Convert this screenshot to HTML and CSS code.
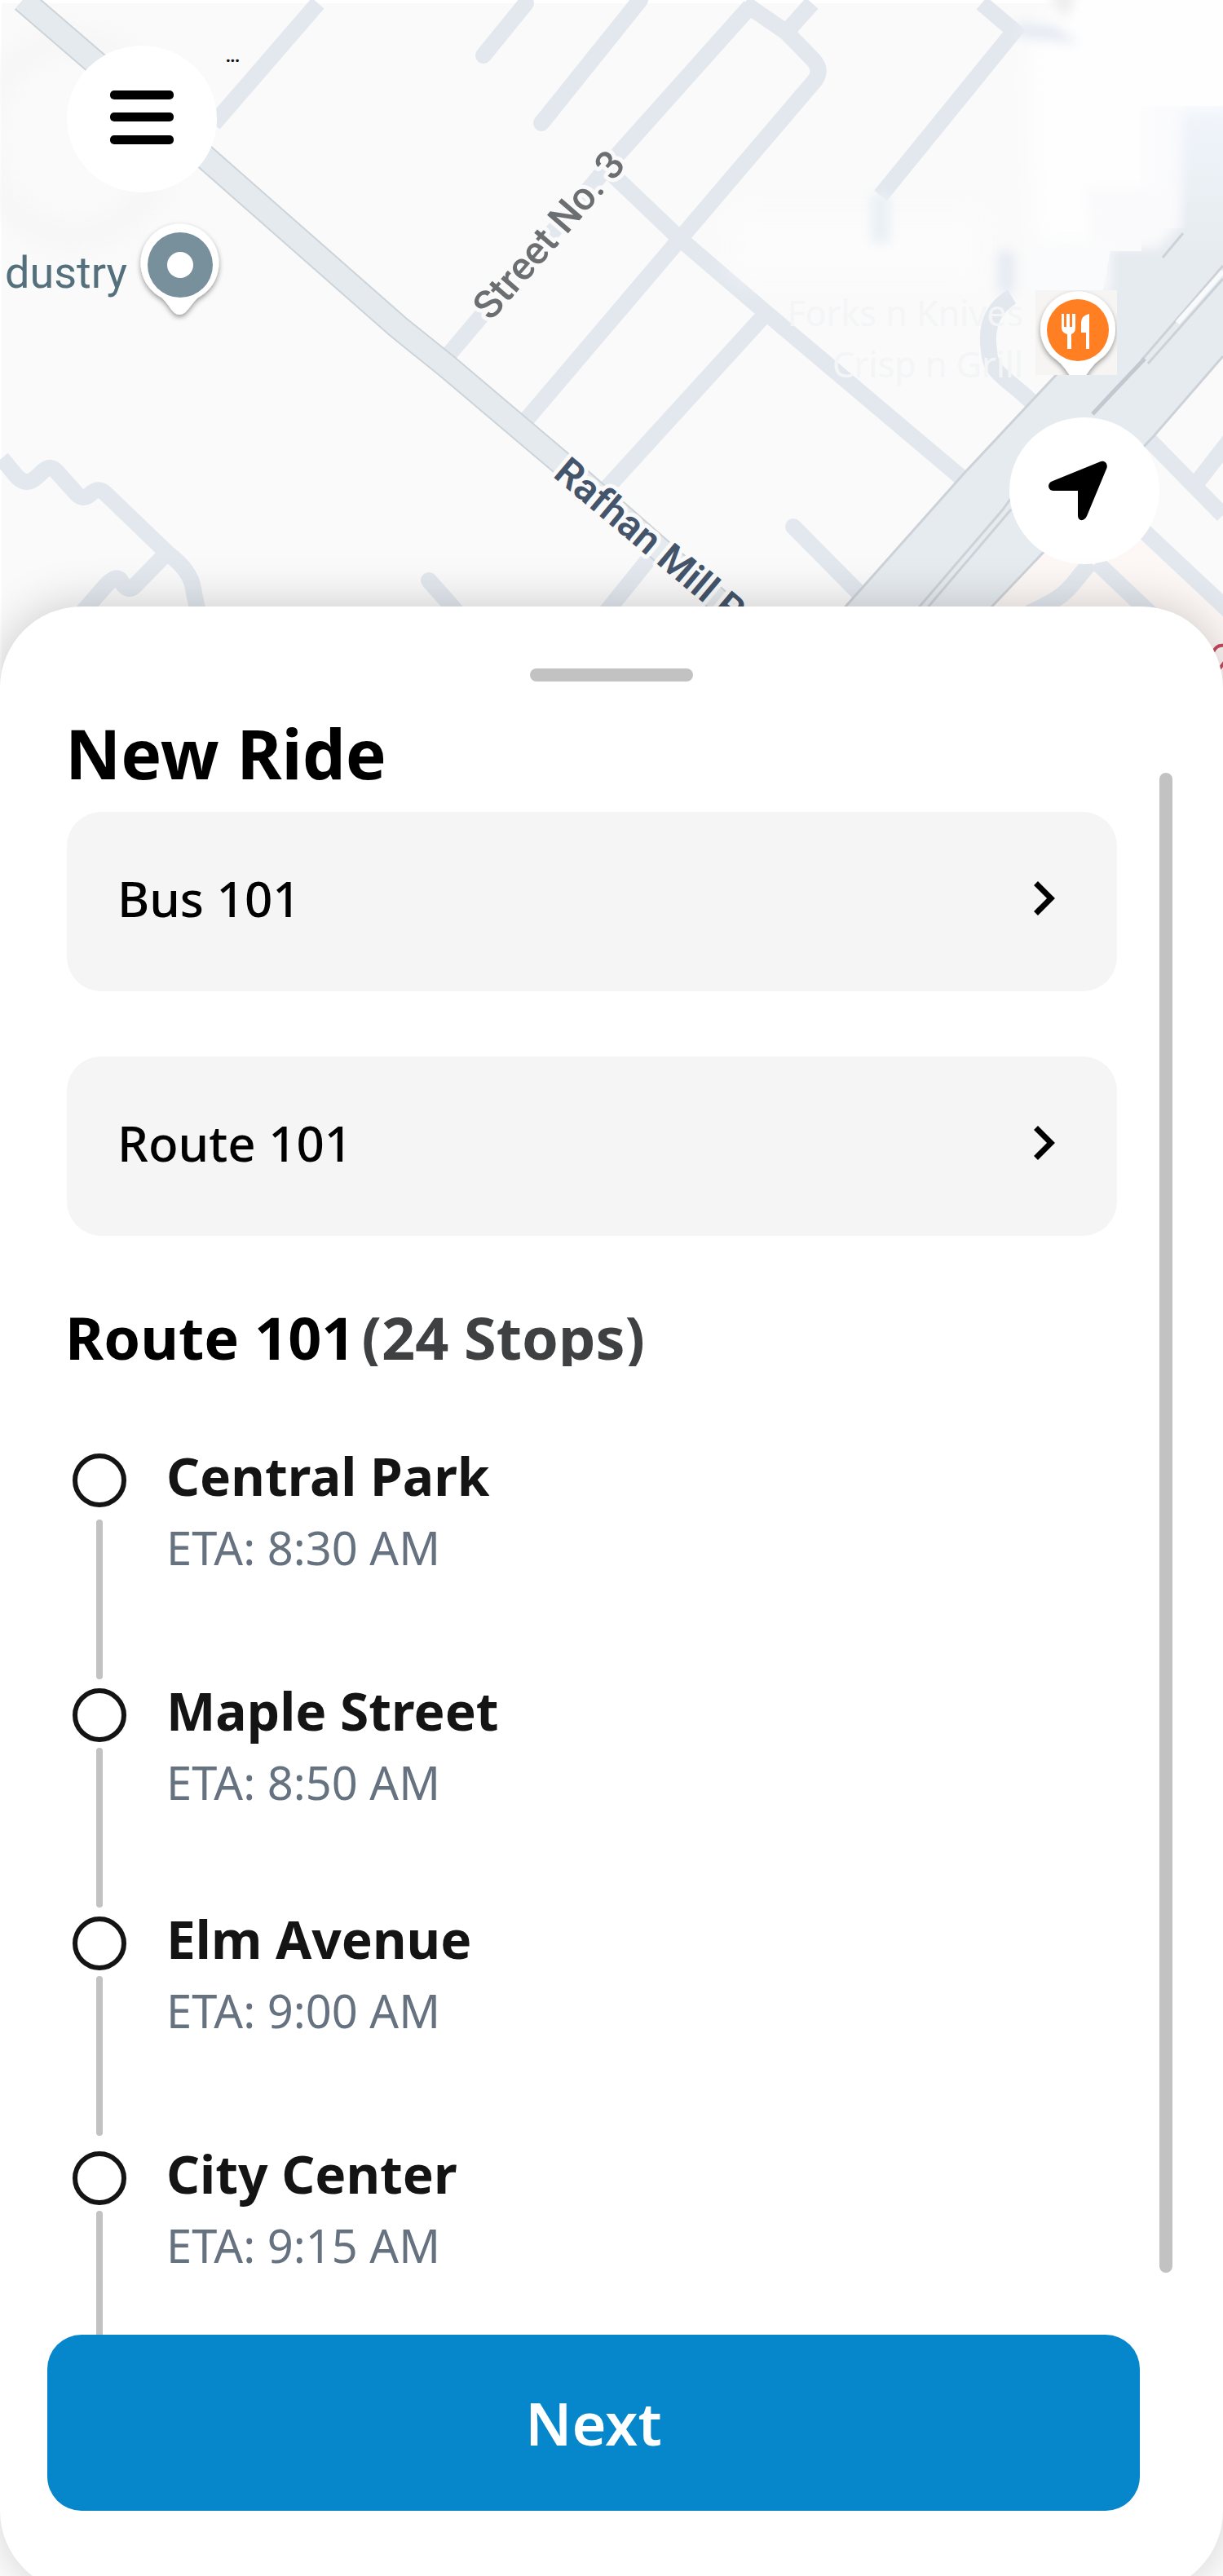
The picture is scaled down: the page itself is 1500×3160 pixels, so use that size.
FILE: index.html
```html
<!DOCTYPE html>
<html lang="en">
<head>
<meta charset="utf-8">
<meta name="viewport" content="width=device-width, initial-scale=1">
<title>New Ride</title>
<link rel="stylesheet" href="styles.css">
</head>
<body>
<div class="app">
  <header class="map">
    <svg class="map-canvas" viewBox="0 0 1500 844" preserveAspectRatio="xMidYMin slice" role="img" aria-label="Map">
      <defs>
        <filter id="soft" x="-60%" y="-60%" width="220%" height="220%"><feGaussianBlur stdDeviation="14"/></filter>
        <filter id="haze" x="-60%" y="-60%" width="220%" height="220%"><feGaussianBlur stdDeviation="7"/></filter>
        <filter id="drop" x="-30%" y="-30%" width="160%" height="160%"><feDropShadow dx="0" dy="3" stdDeviation="3" flood-opacity=".4"/></filter>
        <linearGradient id="strip" x1="0" y1="0" x2="0" y2="1"><stop offset="0" stop-color="#f0f5fb"/><stop offset="1" stop-color="#e6ebf0"/></linearGradient>
        <linearGradient id="fade" x1="0" y1="0" x2="1" y2="0"><stop offset="0" stop-color="#fdfdfe"/><stop offset=".45" stop-color="#fbfbfd"/><stop offset="1" stop-color="#fbfbfd" stop-opacity="0"/></linearGradient>
      </defs>
      <rect x="2" y="4" width="1498" height="840" fill="#fafafa"/>
      <path d="M1216 744L1340 612L1500 740V844H1130z" fill="#fdf8f5"/>

      <g class="street">
        <path d="M390 4L262 152"/>
        <path d="M645 4L593 68" stroke-linecap="round"/>
        <path d="M785 0L664 151" stroke-linecap="round"/>
        <path d="M920 8L760 187L541 446"/>
        <path d="M913 4L965 40L998 74Q1008 86 1000 98L834 293L636 526"/>
        <path d="M996 4L962 42"/>
        <path d="M745 208L834 293L940 384L1184 590"/>
        <path d="M940 384L732 612"/>
        <path d="M810 668L720 780"/>
        <path d="M1204 4L1244 38L1080 240"/>
        <path d="M1241 364Q1206 385 1213 430C1214 460 1240 466 1268 496"/>
        <path d="M1400 530L1500 632M1465 596L1510 538"/>
        <path d="M1396 645L1510 752"/>
        <path d="M1345 690L1440 780M1338 690C1310 720 1316 728 1262 752"/>
        <path d="M973 646L1066 740" stroke-linecap="round"/>
        <path d="M526 712L572 764" stroke-linecap="round"/>
        <path d="M2 562L20 584Q32 597 44 586L54 577Q62 570 70 579L94 606Q102 614 111 606Q121 597 129 605L206 679Q234 700 237 722Q239 734 246 764"/>
        <path d="M203 680L165 719Q158 726 151 717L147 711Q141 706 130 718L90 764"/>
      </g>

      <ellipse cx="90" cy="170" rx="110" ry="120" fill="none" stroke="#f5f5f5" stroke-width="30" filter="url(#soft)" opacity=".8"/>
      <path class="avenue-edge" d="M28 0L253 194L487 400L549 450L686 566L930 780"/>
      <path class="avenue" d="M28 0L253 194L487 400L549 450L686 566L930 780"/>

      <!-- Highway -->
      <rect x="1400" y="130" width="100" height="190" fill="url(#strip)"/>
      <path d="M1030 752L1183 580L1295 460L1345 395L1362 308H1500V437L1415 535L1209 752z" fill="#e6ebf0"/>

      <!-- Faded corner -->
      <path d="M1262 60L1300 0H1520V130H1440V240H1400L1350 300H1270z" fill="#fefefe" filter="url(#soft)"/>
      <path d="M1300 0H1500V130H1340z" fill="#fefefe"/>
      <rect x="1398" y="130" width="60" height="150" fill="url(#fade)"/>
      <path d="M1330 230H1444V276L1420 304H1340z" fill="#fafafc" filter="url(#haze)"/>
      <path d="M1284 -10L1308 24L1320 -10z" fill="#ececed" filter="url(#haze)"/>
      <path d="M1248 26L1296 32L1324 54L1248 46z" fill="#e6ebf3" filter="url(#haze)"/>
      <rect x="900" y="262" width="300" height="80" fill="#fdfdfd" opacity=".7" filter="url(#soft)"/>
      <rect x="1068" y="238" width="24" height="60" fill="#e9f0f5" filter="url(#haze)"/>
      <rect x="1262" y="304" width="100" height="54" fill="#f9fbfd" filter="url(#haze)"/>
      <rect x="1224" y="308" width="20" height="52" fill="#e5eaf3" filter="url(#haze)"/>

      <g fill="none" stroke="#cdd2d9" stroke-width="3">
        <path d="M1030 752L1183 580L1300 455M1500 437L1415 535L1209 752"/>
        <path d="M1121 752L1230 625L1262 580M1132 752L1240 625M1400 442L1500 326M1408 446L1500 342"/>
        <path d="M1340 508L1368 478L1404 440" stroke-width="5" stroke="#c3c7cf"/>
        <path d="M1451 286L1426 316"/>
      </g>
      <path d="M1444 396L1500 333" stroke="#f8fafb" stroke-width="6"/>

      <text class="street-label" transform="translate(602 395) rotate(-49)">Street No. 3</text>
      <text class="avenue-label" transform="translate(677 584) rotate(40)">Rafhan Mill Road</text>
      <text class="place" x="6" y="353">dustry</text>
      <text class="faint" x="1255" y="400" text-anchor="end">Forks n Knives</text>
      <text class="faint" x="1255" y="463" text-anchor="end">Crisp n Grill</text>
      <path d="M1488 800Q1492 790 1502 792M1496 820L1502 812" fill="none" stroke="#c64a5c" stroke-width="4"/>

      <g filter="url(#drop)">
        <path d="M220 386C212 386 208 374 198 365A48 48 0 1 1 243 365C233 374 229 386 220 386z" fill="#fff"/>
      </g>
      <circle cx="221" cy="325" r="40" fill="#78909c"/>
      <circle cx="221" cy="325" r="16" fill="#fff"/>

      <path d="M1270 356H1370V460H1270z" fill="#f6f5f4"/>
      <svg x="1270" y="356" width="100" height="104" viewBox="1270 356 100 104">
        <path d="M1322 472C1312 464 1308 450 1294 440A46 46 0 1 1 1350 440C1336 450 1332 464 1322 472z" fill="#fff" filter="url(#drop)"/>
      </svg>
      <circle cx="1322" cy="405" r="38" fill="#ff7f22"/>
      <path d="M1302 385h3v16h3v-16h4v16h3v-16h4v17q0 6-5 8v18h-5v-18q-7-2-7-8zM1336 385v43h-4v-20h-6v-12q0-9 10-11z" fill="#fff"/>
    </svg>

    <button class="round-button menu-button" type="button" aria-label="Menu">
      <svg width="78" height="66" viewBox="0 0 78 66" aria-hidden="true"><rect width="78" height="11" rx="5"/><rect y="27" width="78" height="11" rx="5"/><rect y="55" width="78" height="11" rx="5"/></svg>
    </button>
    <span class="status">...</span>
    <button class="round-button locate-button" type="button" aria-label="My location">
      <svg width="72" height="74" viewBox="0 0 72 74" aria-hidden="true"><path d="M63 1.500C68 -1 73 3 71.500 9L47 68C44 75 36 75 36 67V37H6C-1 37 -2 28 4 25.500z"/></svg>
    </button>
  </header>

  <main class="sheet">
    <div class="handle"></div>
    <div class="sheet-body">
      <div class="content">
        <h1 class="title">New Ride</h1>
        <div class="options">
          <button class="option" type="button">
            <span>Bus 101</span>
            <svg width="26" height="42" viewBox="0 0 26 42" aria-hidden="true"><path d="M2.500 2.500L21 21L2.500 39.500" fill="none" stroke="#000" stroke-width="7"/></svg>
          </button>
          <button class="option" type="button">
            <span>Route 101</span>
            <svg width="26" height="42" viewBox="0 0 26 42" aria-hidden="true"><path d="M2.500 2.500L21 21L2.500 39.500" fill="none" stroke="#000" stroke-width="7"/></svg>
          </button>
        </div>
        <h2 class="route-title"><span>Route 101</span><span class="stop-count">(24 Stops)</span></h2>
        <ol class="stops">
          <li class="stop">
            <div class="rail"><span class="ring"></span><span class="line"></span></div>
            <div class="stop-text"><h3 class="stop-name">Central Park</h3><p class="eta">ETA: 8:30 AM</p></div>
          </li>
          <li class="stop">
            <div class="rail"><span class="ring"></span><span class="line"></span></div>
            <div class="stop-text"><h3 class="stop-name">Maple Street</h3><p class="eta">ETA: 8:50 AM</p></div>
          </li>
          <li class="stop stop-spaced">
            <div class="rail"><span class="ring"></span><span class="line"></span></div>
            <div class="stop-text"><h3 class="stop-name">Elm Avenue</h3><p class="eta">ETA: 9:00 AM</p></div>
          </li>
          <li class="stop">
            <div class="rail"><span class="ring"></span><span class="line"></span></div>
            <div class="stop-text"><h3 class="stop-name">City Center</h3><p class="eta">ETA: 9:15 AM</p></div>
          </li>
        </ol>
      </div>
      <div class="scrollbar"></div>
    </div>
    <footer class="actions"><button class="next" type="button">Next</button></footer>
  </main>
</div>
</body>
</html>
```
FILE: styles.css
```css
*, *::before, *::after { box-sizing: border-box; }
body { margin: 0; background: #fafafa; font-family: "Noto Sans", "Open Sans", sans-serif; }
h1, h2, h3, p, ol { margin: 0; padding: 0; }
ol { list-style: none; }
button { border: 0; padding: 0; font: inherit; color: inherit; cursor: pointer; }

.app { overflow: hidden; background: #fff; }

/* Map */
.map { position: relative; height: 844px; }
.map-canvas { display: block; width: 100%; height: 100%; }
.street { fill: none; stroke: #e3e8ef; stroke-width: 20px; }
.avenue-edge { fill: none; stroke: #ccd4da; stroke-width: 31px; }
.avenue { fill: none; stroke: #e5eaee; stroke-width: 27px; }
.street-label, .avenue-label { font: 500 48px Roboto, sans-serif; paint-order: stroke; stroke: #fafafa; stroke-width: 10px; stroke-linejoin: round; }
.street-label { fill: #6b6f72; }
.avenue-label { fill: #44546a; font-weight: 600; }
.place { font: 400 54px Roboto, sans-serif; fill: #54707c; }
.faint { font: 400 43px "Noto Sans", sans-serif; fill: #f4f5f6; }

.round-button { position: absolute; display: flex; align-items: center; justify-content: center; width: 184px; height: 180px; border-radius: 50%; background: #fff; }
.menu-button { left: 82px; top: 56px; padding-bottom: 4px; }
.locate-button { right: 78px; top: 512px; padding-right: 16px; }
.status { position: absolute; left: 277px; top: 55px; font-size: 20px; line-height: 28px; font-weight: 700; color: #111; }

/* Sheet */
.sheet { position: relative; margin: -100px 0 -20px; padding: 76px 0 100px; border-radius: 100px; background: #fff; box-shadow: 0 0 60px rgba(0, 0, 0, .2); }
.handle { width: 200px; height: 16px; margin: 0 auto 28px; border-radius: 8px; background: #c2c2c2; }
.sheet-body { display: flex; gap: 52px; padding: 0 62px 0 80px; }
.content { flex: 1; min-width: 0; }
.title { font-size: 84px; line-height: 120px; font-weight: 700; color: #000; }
.options { display: flex; flex-direction: column; gap: 80px; margin: 12px 0 88px 2px; }
.option { display: flex; align-items: center; justify-content: space-between; height: 220px; padding: 0 76px 8px 62px; border-radius: 42px; background: #f5f5f5; font-size: 60px; line-height: 80px; font-weight: 500; color: #000; }
.route-title { display: flex; gap: 8px; overflow: hidden; margin-bottom: 107px; font-size: 72px; line-height: 72px; font-weight: 700; color: #000; }
.stop-count { color: #3f4042; }

.stop { display: flex; gap: 40px; padding-bottom: 11px; }
.stop-spaced { padding-bottom: 19px; }
.stop:last-child { padding-bottom: 0; }
.rail { display: flex; flex-direction: column; align-items: center; gap: 7px; width: 84px; }
.stop:first-child .rail { gap: 15px; }
.ring { width: 66px; height: 66px; border: 6px solid #141414; border-radius: 50%; }
.line { width: 8px; height: 196px; border-radius: 4px; background: #c2c2c2; }
.stop-text { margin-top: -16px; }
.stop-name { font-size: 64px; line-height: 88px; font-weight: 700; color: #141414; }
.eta { font-size: 56px; line-height: 86px; color: #667280; }

.scrollbar { width: 16px; margin: 84px 0 120px; border-radius: 8px; background: #c2c2c2; }

.actions { position: relative; display: flex; margin-top: -44px; padding: 0 102px 0 58px; }
.next { flex: 1; height: 216px; border-radius: 42px; background: #0687cc; color: #fff; font-size: 72px; line-height: 96px; font-weight: 600; }
```
